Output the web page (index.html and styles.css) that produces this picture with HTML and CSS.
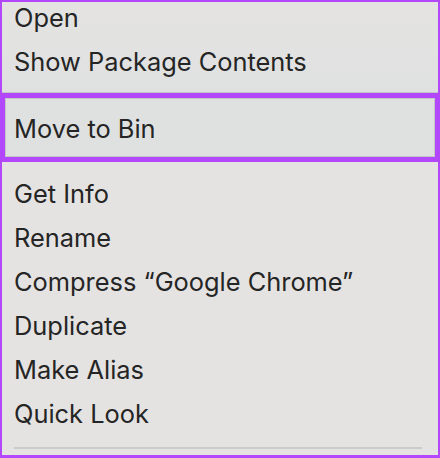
FILE: index.html
```html
<!DOCTYPE html>
<html lang="en">
<head>
    <meta charset="UTF-8">
    <meta name="viewport" content="width=device-width, initial-scale=1.0">
    <title>Context menu</title>
    <link rel="stylesheet" href="styles.css">
</head>
<body>
    <div class="menu">
        <div class="group top">
            <div class="item">Open</div>
            <div class="item">Show Package Contents</div>
        </div>
        <div class="highlight">
            <div class="item">Move to Bin</div>
        </div>
        <div class="group rest">
            <div class="item">Get Info</div>
            <div class="item">Rename</div>
            <div class="item">Compress “Google Chrome”</div>
            <div class="item">Duplicate</div>
            <div class="item">Make Alias</div>
            <div class="item">Quick Look</div>
            <div class="sep"></div>
        </div>
    </div>
</body>
</html>
```

FILE: styles.css
```css
* {
    margin: 0;
    padding: 0;
    box-sizing: border-box;
}
html, body {
    width: 100%;
    height: 100%;
    overflow: hidden;
}
body {
    background: #b347fb;
    font-family: Inter, "Noto Sans", sans-serif;
    color: #252525;
}
.menu {
    width: 440px;
    height: 458px;
    border: 2px solid #b347fb;
    border-bottom-width: 3px;
    background: #e4e3e2;
    display: flex;
    flex-direction: column;
    overflow: hidden;
}
.item {
    font-size: 25.4px;
    line-height: 44px;
    padding-left: 12px;
    white-space: nowrap;
}
.top {
    height: 91px;
    flex-shrink: 0;
    display: flex;
    flex-direction: column;
    justify-content: flex-end;
    padding-bottom: 8px;
    overflow: hidden;
    background: linear-gradient(#e4e3e2, #dfe1e0);
    border-bottom: 1px solid #c4c4c4;
}
.highlight {
    margin: 0 -2px;
    border: 5px solid #b347fb;
    flex-shrink: 0;
}
.highlight .item {
    background: #dfe1e0;
    border: 1px solid #c4c6c6;
    padding: 8px 0 5px 8px;
    height: 59px;
}
.rest {
    padding-top: 10px;
}
.sep {
    height: 2px;
    margin: 11px 16px 0 12px;
    background: #cbcbcb;
}
```
